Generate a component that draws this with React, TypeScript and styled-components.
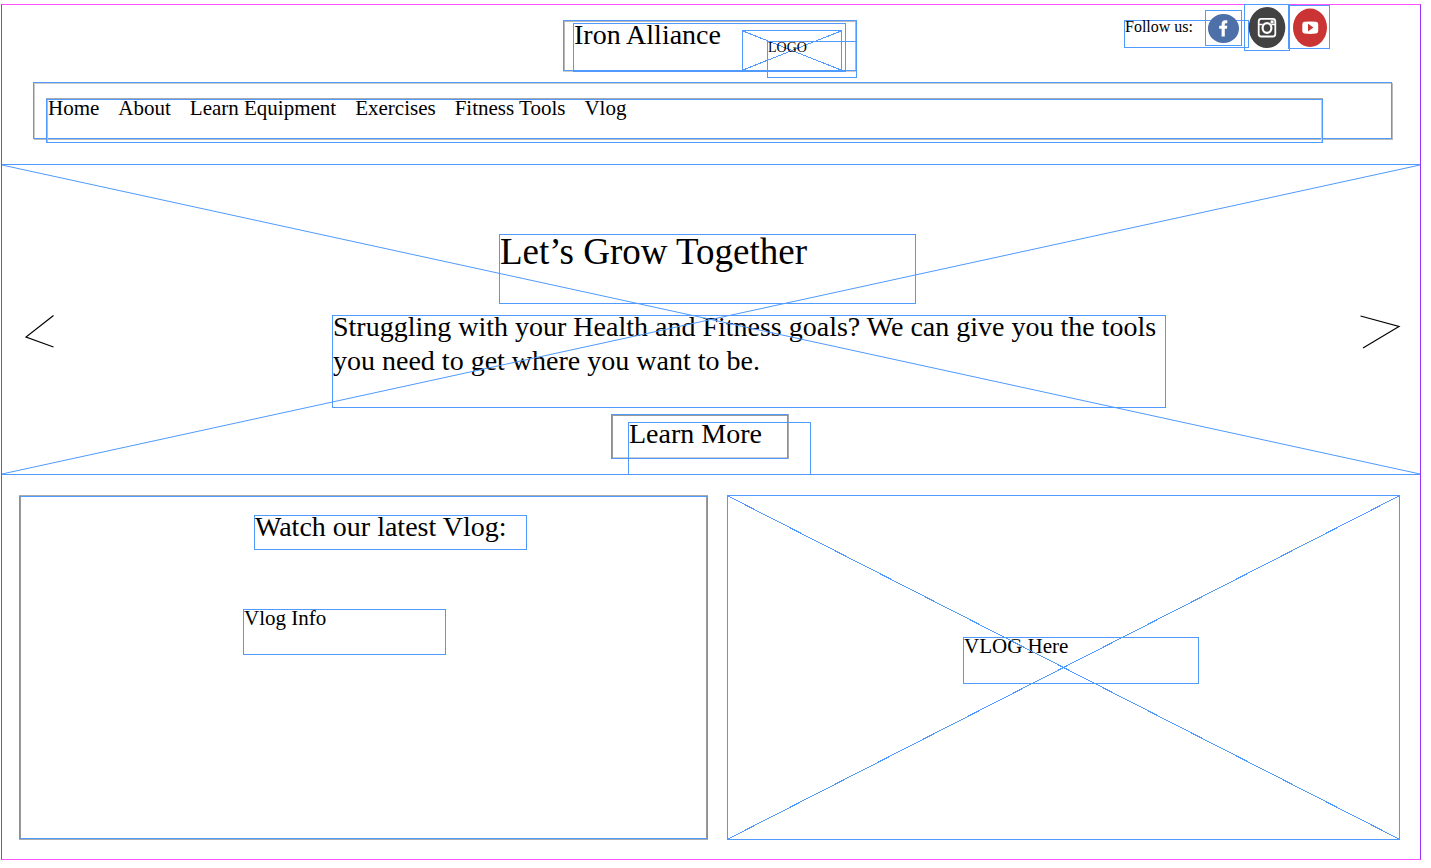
import React from "react";
import styled, { createGlobalStyle, css } from "styled-components";

const BLUE = "#4f99ff";
const PURPLE = "#9933ff";
const MAGENTA = "#ff4fff";

const GlobalStyle = createGlobalStyle`
  *, *::before, *::after { box-sizing: border-box; }
  body {
    margin: 0;
    background: #fff;
    color: #000;
    font-family: "Liberation Serif", "Times New Roman", serif;
  }
  h1, h2, p, ul { margin: 0; padding: 0; font-weight: 400; }
`;

type Size = "tiny" | "small" | "body" | "large" | "display";

const textSizes = {
  tiny: css`font-size: 14px; line-height: 17px; margin-top: -3px;`,
  small: css`font-size: 16px; line-height: 19px; margin-top: -4px;`,
  body: css`font-size: 21px; line-height: 25px; margin-top: -4px;`,
  large: css`font-size: 28px; line-height: 34px; margin-top: -6px;`,
  display: css`font-size: 37px; line-height: 44px; margin-top: -5px;`,
};

const Text = styled.span<{ $size: Size }>`
  display: block;
  text-align: left;
  ${({ $size }) => textSizes[$size]}
`;

const frame = css`
  border: 1px solid ${BLUE};
`;

const Page = styled.div`
  display: flex;
  flex-direction: column;
  min-height: calc(100vh - 12px);
  margin: 4px 10px 8px 1px;
  border: 1px solid;
  border-color: ${MAGENTA} ${PURPLE};
`;

const Header = styled.header`
  padding-bottom: 25px;
`;

const TopRow = styled.div`
  display: grid;
  grid-template-columns: 1fr auto 1fr;
  align-items: start;
  height: 77px;
`;

const Brand = styled.div`
  ${frame}
  position: relative;
  grid-column: 2;
  width: 294px;
  margin-top: 15px;
  margin-right: 2px;
  padding: 2px 10px 0 9px;
  box-shadow: inset 1px 1px 0 #b8b8b8, inset -1px 0 0 #b8b8b8, 0 1px 0 #ccc;
`;

const BrandName = styled.div`
  ${frame}
  height: 49px;
  margin-bottom: -2px;
`;

const LogoBox = styled.div`
  ${frame}
  position: absolute;
  top: 9px;
  left: 178px;
  width: 100px;
  height: 41px;
`;

const LogoLabel = styled.div`
  ${frame}
  position: absolute;
  top: 20px;
  left: 203px;
  width: 90px;
  height: 37px;
`;

const Social = styled.div`
  display: flex;
  justify-self: end;
  align-items: flex-start;
  margin-right: 90px;
`;

const FollowLabel = styled.div`
  ${frame}
  width: 125px;
  height: 28px;
  margin: 15px -44px 0 0;
`;

const SocialLink = styled.a<{ $w: number; $h: number; $top: number; $gap: number }>`
  ${frame}
  flex: none;
  width: ${({ $w }) => $w}px;
  height: ${({ $h }) => $h}px;
  margin: ${({ $top }) => $top}px 0 0 ${({ $gap }) => $gap}px;
  svg { display: block; }
`;

const NavBar = styled.nav`
  ${frame}
  margin: 0 28px 0 31px;
  padding: 16px 68px 0 12px;
  box-shadow: inset 1px 1px 0 #ccc, 1px 1px 0 #bbb;
`;

const NavList = styled.ul`
  ${frame}
  display: flex;
  gap: 19px;
  height: 44px;
  margin-bottom: -5px;
  padding-left: 1px;
  list-style: none;
  box-shadow: inset 1px 0 0 #bbb, inset -1px 0 0 #ccc, 0 -1px 0 #aaa;
`;

const NavLink = styled.a`
  color: inherit;
  text-decoration: none;
`;

const Hero = styled.section`
  position: relative;
  display: flex;
  justify-content: space-between;
  align-items: flex-start;
  padding: 69px 19px 15px 22px;
  border: solid ${BLUE};
  border-width: 1px 0;
`;

const Cross = styled.svg`
  position: absolute;
  inset: 0;
  width: 100%;
  height: 100%;
  pointer-events: none;
`;

const ArrowButton = styled.button`
  flex: none;
  margin: 80px 0 0;
  padding: 0;
  border: 0;
  background: none;
  cursor: pointer;
  svg { display: block; }
`;

const HeroCopy = styled.div`
  display: flex;
  flex-direction: column;
  align-items: flex-start;
  width: 834px;
  margin-left: 83px;
`;

const HeroTitle = styled.h1`
  ${frame}
  width: 417px;
  height: 70px;
  margin: 0 0 11px 167px;
`;

const HeroText = styled.p`
  ${frame}
  width: 100%;
  min-height: 93px;
  margin-bottom: 6px;
`;

const LearnMore = styled.button`
  ${frame}
  position: relative;
  width: 177px;
  height: 45px;
  margin-left: 279px;
  padding: 0;
  background: none;
  color: inherit;
  font-family: inherit;
  box-shadow: inset 1px 1px 0 #999, inset 0 -1px 0 #ccc, 1px 0 0 #aaa;
  cursor: pointer;
`;

const LearnMoreLabel = styled.span`
  ${frame}
  position: absolute;
  top: 7px;
  left: 16px;
  width: 183px;
  height: 53px;
`;

const Lower = styled.main`
  display: grid;
  flex: 1;
  grid-template-columns: 689fr 673fr;
  gap: 19px;
  padding: 20px 20px 19px 17px;
`;

const VlogPanel = styled.section`
  ${frame}
  display: flex;
  flex-direction: column;
  align-items: center;
  margin: 1px 0;
  padding: 18px 0 18px 43px;
  box-shadow: inset 1px 0 0 #999, inset -1px 0 0 #999, 0 -1px 0 #aaa, 0 1px 0 #aaa;
`;

const VlogCopy = styled.div`
  display: flex;
  flex-direction: column;
  width: 284px;
  gap: 59px;
`;

const VlogHeading = styled.h2`
  ${frame}
  align-self: flex-end;
  width: 273px;
  height: 35px;
`;

const VlogInfo = styled.div`
  ${frame}
  width: 203px;
  height: 46px;
`;

const VideoPanel = styled.section`
  ${frame}
  position: relative;
  display: flex;
  justify-content: center;
  align-items: center;
  padding: 0 0 14px 35px;
`;

const VideoLabel = styled.div`
  ${frame}
  width: 236px;
  height: 47px;
`;

const Diagonals = () => (
  <Cross viewBox="0 0 100 100" preserveAspectRatio="none" shapeRendering="crispEdges" aria-hidden="true">
    <path d="M0 0L100 100M0 100L100 0" fill="none" stroke={BLUE} strokeWidth="1" vectorEffect="non-scaling-stroke" />
  </Cross>
);

const links = ["Home", "About", "Learn Equipment", "Exercises", "Fitness Tools", "Vlog"];

export default function App() {
  return (
    <>
      <GlobalStyle />
      <Page>
        <Header>
          <TopRow>
            <Brand>
              <BrandName>
                <Text $size="large">Iron Alliance</Text>
              </BrandName>
              <LogoBox>
                <Diagonals />
              </LogoBox>
              <LogoLabel>
                <Text $size="tiny">LOGO</Text>
              </LogoLabel>
            </Brand>
            <Social>
              <FollowLabel>
                <Text $size="small">Follow us:</Text>
              </FollowLabel>
              <SocialLink href="#facebook" aria-label="Facebook" $w={37} $h={36} $top={5} $gap={0}>
                <svg width="35" height="34" viewBox="0 0 35 34">
                  <ellipse cx="17.5" cy="17.5" rx="15.5" ry="14.5" fill="#4d70a8" />
                  <path d="M15.6 25.5v-7.7h-2.4v-3h2.4v-1.6c0-2.6 1.4-3.9 3.7-3.9h2v3h-1.3c-.9 0-1.2.5-1.2 1.2v1.3h2.5l-.4 3h-2.1v7.7z" fill="#fff" />
                </svg>
              </SocialLink>
              <SocialLink href="#instagram" aria-label="Instagram" $w={46} $h={47} $top={-1} $gap={2}>
                <svg width="44" height="45" viewBox="0 0 44 45">
                  <ellipse cx="22" cy="22.5" rx="18.3" ry="20.5" fill="#424242" />
                  <rect x="13.7" y="13.9" width="16.6" height="17.6" rx="2.5" fill="none" stroke="#fff" strokeWidth="1.8" />
                  <path d="M13.7 19.5h4M26.3 19.5h4" stroke="#fff" strokeWidth="1.4" />
                  <ellipse cx="22" cy="23" rx="4.4" ry="4.9" fill="#424242" stroke="#fff" strokeWidth="2.2" />
                  <rect x="25.6" y="15.4" width="3" height="3" fill="#fff" />
                </svg>
              </SocialLink>
              <SocialLink href="#youtube" aria-label="YouTube" $w={42} $h={44} $top={0} $gap={-2}>
                <svg width="40" height="42" viewBox="0 0 40 42">
                  <ellipse cx="21" cy="21.7" rx="17" ry="19.2" fill="#cb3434" />
                  <path d="M15.5 15.8q6-.7 11.5 0 2.2.2 2.2 2.5v6.8q0 2.3-2.2 2.5-5.5.6-11.5 0-2.2-.2-2.2-2.5v-6.8q0-2.3 2.2-2.5z" fill="#fff" />
                  <path d="M19 17.8v7.6l5.4-3.8z" fill="#cb3434" />
                </svg>
              </SocialLink>
            </Social>
          </TopRow>
          <NavBar>
            <NavList>
              {links.map((label) => (
                <li key={label}>
                  <NavLink href={`#${label.toLowerCase().replace(" ", "-")}`}>
                    <Text $size="body">{label}</Text>
                  </NavLink>
                </li>
              ))}
            </NavList>
          </NavBar>
        </Header>

        <Hero>
          <ArrowButton aria-label="Previous slide">
            <svg width="32" height="34" viewBox="0 0 32 34">
              <path d="M29.5 1.5L2 23L29.5 33" fill="none" stroke="#000" strokeWidth="1.2" />
            </svg>
          </ArrowButton>
          <HeroCopy>
            <HeroTitle>
              <Text $size="display">Let’s Grow Together</Text>
            </HeroTitle>
            <HeroText>
              <Text $size="large">
                Struggling with your Health and Fitness goals? We can give you the tools you need to get where you want to be.
              </Text>
            </HeroText>
            <LearnMore>
              <LearnMoreLabel>
                <Text $size="large">Learn More</Text>
              </LearnMoreLabel>
            </LearnMore>
          </HeroCopy>
          <ArrowButton aria-label="Next slide">
            <svg width="42" height="36" viewBox="0 0 42 36">
              <path d="M1.5 2L40 12.5L4 34" fill="none" stroke="#000" strokeWidth="1.2" />
            </svg>
          </ArrowButton>
          <Diagonals />
        </Hero>

        <Lower>
          <VlogPanel>
            <VlogCopy>
              <VlogHeading>
                <Text $size="large">Watch our latest Vlog:</Text>
              </VlogHeading>
              <VlogInfo>
                <Text $size="body">Vlog Info</Text>
              </VlogInfo>
            </VlogCopy>
          </VlogPanel>
          <VideoPanel>
            <VideoLabel>
              <Text $size="body">VLOG Here</Text>
            </VideoLabel>
            <Diagonals />
          </VideoPanel>
        </Lower>
      </Page>
    </>
  );
}
